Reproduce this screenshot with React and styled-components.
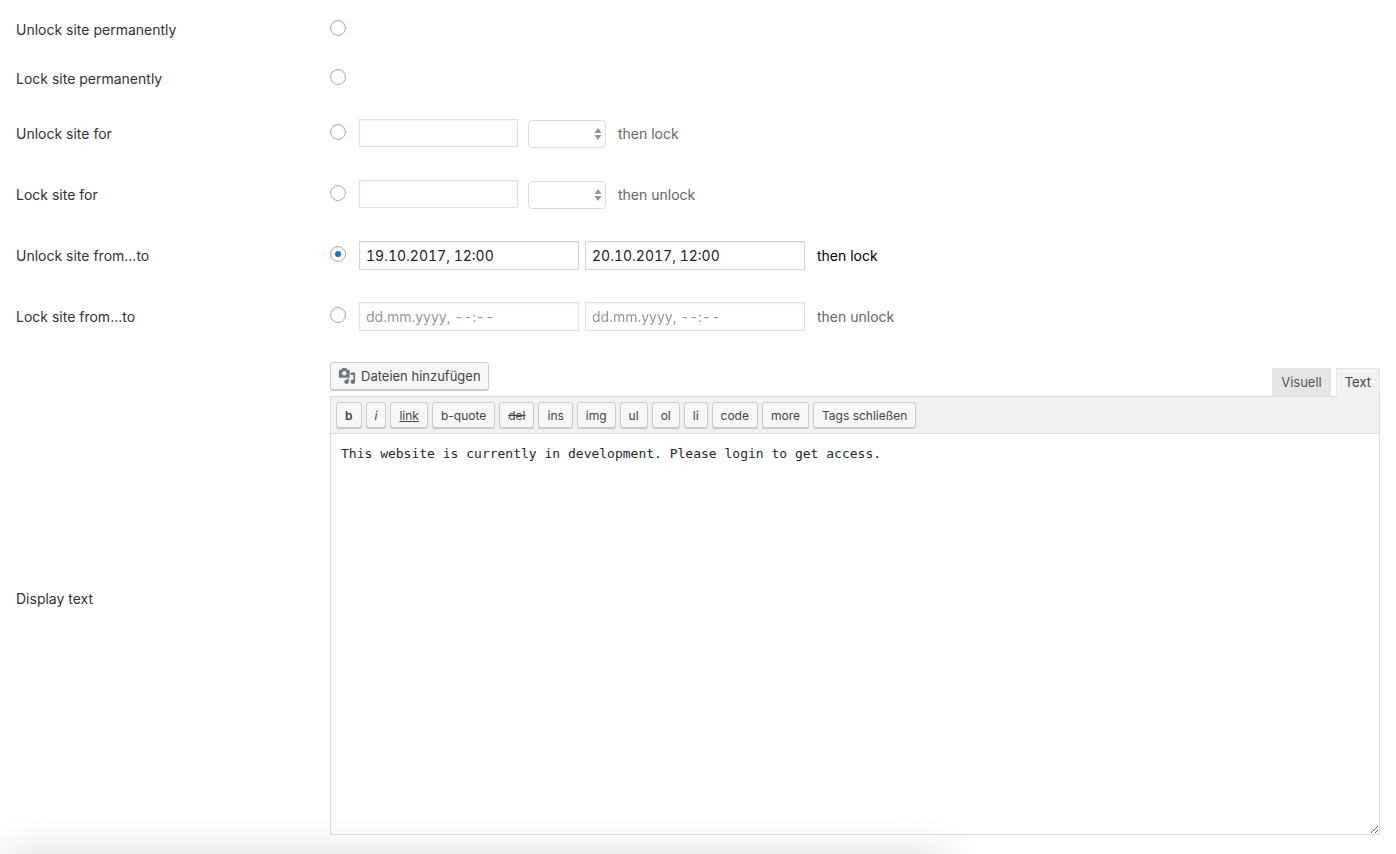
import { useState } from "react";
import styled, { createGlobalStyle } from "styled-components";

const quicktags=[
    {label:'b', look:'bold'},
    {label:'i', look:'italic'},
    {label:'link', look:'underline'},
    {label:'b-quote'},
    {label:'del', look:'strike'},
    {label:'ins'},
    {label:'img'},
    {label:'ul'},
    {label:'ol'},
    {label:'li'},
    {label:'code'},
    {label:'more'},
    {label:'Tags schließen'},
];

const App=()=>{
    const [mode,setMode]=useState('unlockFromTo');
    const [tab,setTab]=useState('text');
    const [values,setValues]=useState({
        unlockFor:'',
        lockFor:'',
        unlockFrom:'19.10.2017, 12:00',
        unlockTo:'20.10.2017, 12:00',
        lockFrom:'',
        lockTo:'',
        text:'This website is currently in development. Please login to get access.'
    });
    const change=(key)=>(e)=>setValues({...values,[key]:e.target.value});

    const radio=(id)=>(
        <Radio type="radio" name="mode" id={id} checked={mode==id} onChange={()=>setMode(id)} />
    );
    const duration=(id,then)=>(
        <Controls>
            {radio(id)}
            <Fields $active={mode==id}>
                <DurationInput aria-label="Duration" value={values[id]} onChange={change(id)} />
                <SelectWrap>
                    <Select aria-label="Unit" defaultValue="">
                        <option value=""></option>
                        <option value="m">min</option>
                        <option value="h">h</option>
                        <option value="d">d</option>
                    </Select>
                    <Arrows viewBox="0 0 8 14"><path d="M4 1l3.5 5h-7zM4 13L.5 8h7z" /></Arrows>
                </SelectWrap>
            </Fields>
            <Then $active={mode==id}>{then}</Then>
        </Controls>
    );
    const range=(id,from,to,then)=>(
        <Controls>
            {radio(id)}
            <Fields $active={mode==id}>
                <DateInput aria-label="From" placeholder="dd.mm.yyyy, --:--" value={values[from]} onChange={change(from)} />
                <DateInput aria-label="To" placeholder="dd.mm.yyyy, --:--" value={values[to]} onChange={change(to)} />
            </Fields>
            <Then $active={mode==id}>{then}</Then>
        </Controls>
    );

    return(
        <>
        <GlobalStyle />
        <Form onSubmit={e=>e.preventDefault()}>
            <Row $compact>
                <Label htmlFor="unlock">Unlock site permanently</Label>
                <Controls>{radio('unlock')}</Controls>
            </Row>
            <Row $compact>
                <Label htmlFor="lock">Lock site permanently</Label>
                <Controls>{radio('lock')}</Controls>
            </Row>
            <Row>
                <Label htmlFor="unlockFor">Unlock site for</Label>
                {duration('unlockFor','then lock')}
            </Row>
            <Row>
                <Label htmlFor="lockFor">Lock site for</Label>
                {duration('lockFor','then unlock')}
            </Row>
            <Row>
                <Label htmlFor="unlockFromTo">Unlock site from...to</Label>
                {range('unlockFromTo','unlockFrom','unlockTo','then lock')}
            </Row>
            <Row>
                <Label htmlFor="lockFromTo">Lock site from...to</Label>
                {range('lockFromTo','lockFrom','lockTo','then unlock')}
            </Row>
            <Row>
                <Label htmlFor="displayText">Display text</Label>
                <Editor>
                    <EditorTop>
                        <MediaButton type="button">
                            <MediaIcon viewBox="0 0 20 20">
                                <path fillRule="evenodd" d="M13 11V4c0-.55-.45-1-1-1h-1.67L9 1H5L3.67 3H2c-.55 0-1 .45-1 1v7c0 .55.45 1 1 1h10c.55 0 1-.45 1-1zM7 4.5c1.38 0 2.5 1.12 2.5 2.5S8.38 9.5 7 9.5 4.5 8.38 4.5 7 5.62 4.5 7 4.5zM14 6h5v10.5c0 1.38-1.12 2.5-2.5 2.5S14 17.88 14 16.5s1.12-2.5 2.5-2.5c.17 0 .34.02.5.05V9h-3V6zm-4 8.05V13h2v3.5c0 1.38-1.12 2.5-2.5 2.5S7 17.88 7 16.5 8.12 14 9.5 14c.17 0 .34.02.5.05z" />
                            </MediaIcon>
                            Dateien hinzufügen
                        </MediaButton>
                        <Tabs>
                            <Tab type="button" $active={tab=='visual'} onClick={()=>setTab('visual')}>Visuell</Tab>
                            <Tab type="button" $active={tab=='text'} onClick={()=>setTab('text')}>Text</Tab>
                        </Tabs>
                    </EditorTop>
                    <Toolbar>
                        {quicktags.map(tag=>(
                            <TagButton type="button" key={tag.label} $look={tag.look}>{tag.label}</TagButton>
                        ))}
                    </Toolbar>
                    <TextArea id="displayText" spellCheck={false} value={values.text} onChange={change('text')} />
                </Editor>
            </Row>
        </Form>
        <BottomShadow />
        </>
    )
}
export default App;

const GlobalStyle=createGlobalStyle`
*{
    box-sizing: border-box;
}
body{
    margin: 0;
    background: #fff;
    color: #32373c;
    font-family: Inter, "Liberation Sans", sans-serif;
    font-size: 14px;
    line-height: 19px;
}
`
const Form=styled.form`
padding: 5px 16px 0;
`
const Row=styled.div`
display: grid;
grid-template-columns: 314px minmax(0, 1fr);
align-items: center;
min-height: ${p=>p.$compact?'49px':'61px'};
padding: 15px 0;
`
const Label=styled.label`
color: #333;
justify-self: start;
`
const Controls=styled.div`
display: flex;
align-items: center;
`
const Radio=styled.input`
appearance: none;
flex: none;
width: 16px;
height: 16px;
margin: 0 13px 3px 0;
display: grid;
place-items: center;
border: 1px solid #a9aeb3;
border-radius: 50%;
background: #fff;
box-shadow: inset 0 1px 2px rgba(0,0,0,.1);
&:checked::before{
    content: "";
    width: 6px;
    height: 6px;
    border-radius: 50%;
    background: #1577b3;
}
`
const Fields=styled.div`
display: flex;
align-items: flex-start;
gap: 6px;
opacity: ${p=>p.$active?1:.7};
`
const TextInput=styled.input`
margin: 0;
padding: 3px 6px;
border: 1px solid #d5d5d5;
border-radius: 0;
background: #fff;
box-shadow: inset 0 1px 2px rgba(0,0,0,.07);
color: #222;
font: inherit;
`
const DurationInput=styled(TextInput)`
width: 159px;
height: 28px;
margin-right: 4px;
`
const DateInput=styled(TextInput)`
width: 220px;
height: 29px;
font-variant-numeric: tabular-nums;
&::placeholder{
    color: #6a6a6a;
    opacity: 1;
}
`
const SelectWrap=styled.div`
position: relative;
display: flex;
margin-top: 1px;
`
const Select=styled.select`
appearance: none;
width: 78px;
height: 28px;
padding: 2px 20px 2px 8px;
border: 1px solid #d0d0d0;
border-radius: 4px;
background: #fff;
font: inherit;
`
const Arrows=styled.svg`
position: absolute;
top: 7px;
right: 4px;
width: 8px;
height: 14px;
fill: #666;
pointer-events: none;
`
const Then=styled.span`
margin-left: 12px;
color: ${p=>p.$active?'#000':'#666'};
`
const Editor=styled.div`
min-width: 0;
`
const EditorTop=styled.div`
display: flex;
justify-content: space-between;
align-items: flex-start;
height: 34px;
`
const Button=styled.button`
border: 1px solid #ccc;
border-radius: 3px;
background: #f7f7f7;
box-shadow: 0 1px 0 #ccc;
color: #444;
font-family: inherit;
font-size: 13px;
`
const MediaButton=styled(Button)`
display: flex;
align-items: center;
gap: 5px;
height: 28px;
padding: 0 7px;
`
const MediaIcon=styled.svg`
width: 18px;
height: 18px;
fill: #72777c;
`
const Tabs=styled.div`
display: flex;
gap: 5px;
padding-top: 6px;
`
const Tab=styled.button`
height: 29px;
padding: 0 8px 2px;
border: 1px solid #e5e5e5;
border-bottom-color: ${p=>p.$active?'#f1f1f1':'#ddd'};
background: ${p=>p.$active?'#f1f1f1':'#e6e6e6'};
color: ${p=>p.$active?'#444':'#555'};
font-family: inherit;
font-size: 13px;
position: relative;
`
const Toolbar=styled.div`
display: flex;
flex-wrap: wrap;
gap: 4px;
padding: 5px;
border: 1px solid #ddd;
background: #f1f1f1;
`
const looks={
    bold:'font-weight: 600;',
    italic:'font-style: italic;',
    underline:'text-decoration: underline;',
    strike:'text-decoration: line-through;'
}
const TagButton=styled(Button)`
height: 26px;
padding: 0 8px;
font-size: 12px;
${p=>looks[p.$look]}
`
const TextArea=styled.textarea`
display: block;
width: 100%;
height: 401px;
margin: 0;
padding: 10px;
border: 1px solid #ddd;
border-top: 0;
background: #fff;
color: #23282d;
font-family: "DejaVu Sans Mono", "Liberation Mono", monospace;
font-size: 13px;
line-height: 20px;
resize: vertical;
`
// soft shadow coming up from below the bottom edge of the window
const BottomShadow=styled.div`
position: fixed;
top: 100%;
left: 8px;
width: 67%;
height: 80px;
pointer-events: none;
box-shadow: 0 4px 44px rgba(0,0,0,.2);
`
